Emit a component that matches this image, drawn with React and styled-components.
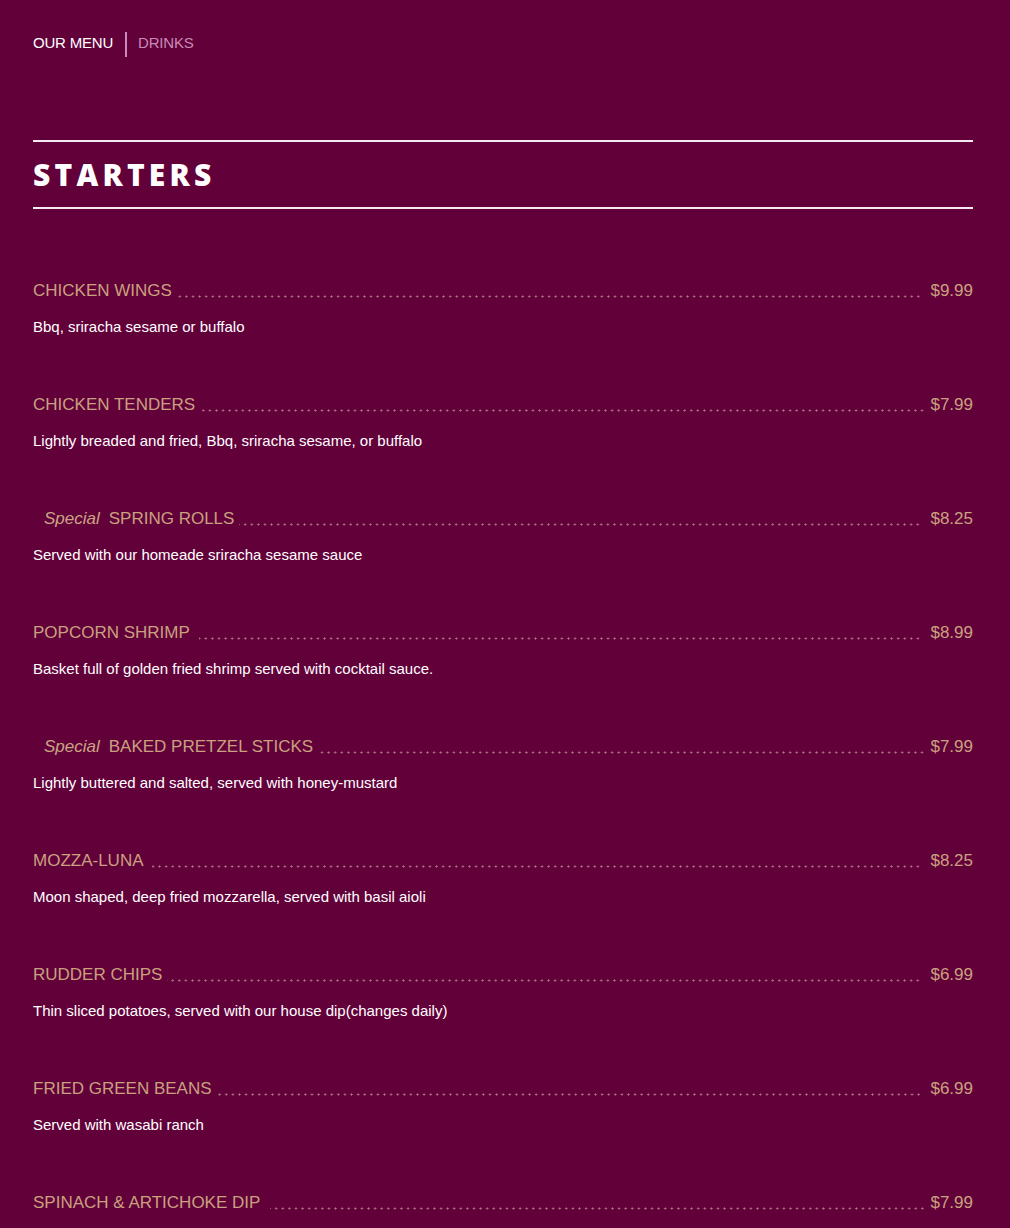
import React from 'react';
import styled, { createGlobalStyle } from 'styled-components';

const GlobalStyle = createGlobalStyle`
  html, body {
    margin: 0;
    padding: 0;
    background: #62003a;
  }
  body {
    font-family: "Liberation Sans", Arial, Helvetica, sans-serif;
    -webkit-font-smoothing: antialiased;
  }
  * { box-sizing: border-box; }
`;

const Page = styled.main`
  width: 1010px;
  min-height: 1228px;
  padding: 32px 37px 40px 33px;
  background: #62003a;
`;

const Nav = styled.nav`
  display: flex;
  align-items: center;
  height: 25px;
`;

const NavLink = styled.a`
  font-size: 15px;
  line-height: 22px;
  padding-bottom: 3px;
  text-transform: uppercase;
  text-decoration: none;
  letter-spacing: -0.2px;
  color: ${(p) => (p.$active ? '#ffffff' : '#c98bb5')};
`;

const NavDivider = styled.span`
  width: 2px;
  height: 25px;
  margin: 0 11px 0 12px;
  background: #c98bb8;
`;

const SectionHeader = styled.header`
  margin-top: 83px;
  height: 69px;
  display: flex;
  align-items: center;
  border-top: 2px solid #f6eaf2;
  border-bottom: 2px solid #f6eaf2;
`;

const SectionTitle = styled.h2`
  margin: 0;
  font-family: "Open Sans", "DejaVu Sans", sans-serif;
  font-weight: 800;
  font-size: 30px;
  letter-spacing: 4.2px;
  color: #ffffff;
  text-transform: uppercase;
`;

const ItemList = styled.div`
  margin-top: 70px;
  display: flex;
  flex-direction: column;
  gap: 56px;
`;

const Item = styled.article`
  display: flex;
  flex-direction: column;
`;

const NameRow = styled.div`
  display: flex;
  align-items: stretch;
  font-size: 17px;
  line-height: 24px;
  color: #c9a17f;
`;

const Special = styled.em`
  font-style: italic;
  padding-left: 11px;
  margin-right: 9px;
  color: #c9a482;
`;

const Name = styled.span`
  white-space: pre;
  text-transform: uppercase;
`;

const Leader = styled.span`
  flex: 1;
  margin: 0 ${(p) => (p.$tight ? 5 : 9)}px 0 5px;
  background-image: radial-gradient(circle, rgba(205, 150, 160, 0.8) 0.8px, transparent 1.3px);
  background-size: 6.6px 3px;
  background-repeat: repeat-x;
  background-position: right bottom 5px;
`;

const Price = styled.span`
  white-space: nowrap;
`;

const Description = styled.p`
  margin: 14px 0 0;
  font-size: 15px;
  line-height: 20px;
  color: #ffffff;
`;

const items = [
  { name: 'Chicken Wings', price: '$9.99', desc: 'Bbq, sriracha sesame or buffalo' },
  { name: 'Chicken Tenders', price: '$7.99', desc: 'Lightly breaded and fried, Bbq, sriracha sesame, or buffalo', tight: true },
  { name: 'Spring Rolls', special: true, price: '$8.25', desc: 'Served with our homeade sriracha sesame sauce' },
  { name: 'Popcorn Shrimp ', price: '$8.99', desc: 'Basket full of golden fried shrimp served with cocktail sauce.' },
  { name: 'Baked Pretzel Sticks', special: true, price: '$7.99', desc: 'Lightly buttered and salted, served with honey-mustard', tight: true },
  { name: 'Mozza-Luna ', price: '$8.25', desc: 'Moon shaped, deep fried mozzarella, served with basil aioli' },
  { name: 'Rudder Chips', price: '$6.99', desc: 'Thin sliced potatoes, served with our house dip(changes daily)' },
  { name: 'Fried Green Beans', price: '$6.99', desc: 'Served with wasabi ranch' },
  { name: 'Spinach & Artichoke Dip ', price: '$7.99', tight: true },
];

export default function App() {
  return (
    <>
      <GlobalStyle />
      <Page>
        <Nav>
          <NavLink $active href="#">Our Menu</NavLink>
          <NavDivider />
          <NavLink href="#">Drinks</NavLink>
        </Nav>
        <SectionHeader>
          <SectionTitle>Starters</SectionTitle>
        </SectionHeader>
        <ItemList>
          {items.map((it) => (
            <Item key={it.name}>
              <NameRow>
                {it.special && <Special>Special</Special>}
                <Name>{it.name}</Name>
                <Leader $tight={it.tight} />
                <Price>{it.price}</Price>
              </NameRow>
              {it.desc && <Description>{it.desc}</Description>}
            </Item>
          ))}
        </ItemList>
      </Page>
    </>
  );
}
